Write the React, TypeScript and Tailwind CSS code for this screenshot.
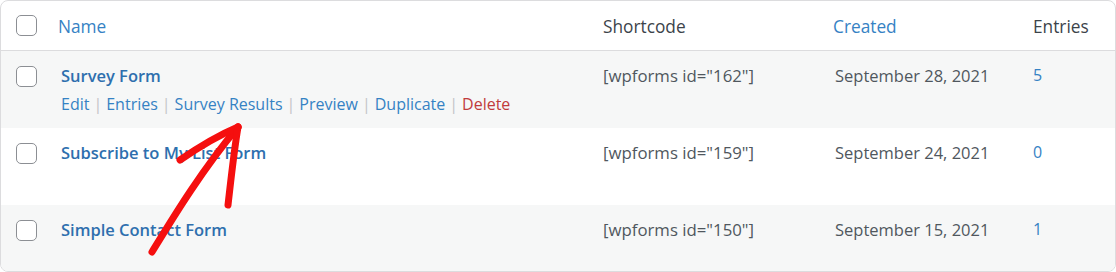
import React from "react";

const Check = () => (
  <span className="block w-[21px] h-[21px] rounded-[5px] border border-[#8c8f94] bg-white" />
);

const rows = [
  { title: "Survey Form", id: "162", date: "September 28, 2021", n: "5", actions: true, bg: "bg-[#f6f7f7]", h: "h-[77px]" },
  { title: "Subscribe to My List Form", id: "159", date: "September 24, 2021", n: "0", actions: false, bg: "bg-white", h: "h-[77px]" },
  { title: "Simple Contact Form", id: "150", date: "September 15, 2021", n: "1", actions: false, bg: "bg-[#f6f7f7]", h: "h-[67px]" },
];

export default function App() {
  const sep = <span className="text-[#c3c4c7] px-[4px]">|</span>;
  return (
    <div className="w-[1116px] h-[272px] bg-white" style={{ fontFamily: '"Open Sans", "Noto Sans", sans-serif' }}>
      <div className="relative w-full h-full border border-[#dcdcde] rounded-[8px] overflow-hidden">
        <div className="grid grid-cols-[57px_545px_230px_200px_1fr] h-[50px] items-center border-b border-[#dcdcde] shadow-[0_1px_1px_rgba(0,0,0,0.04)] text-[17.3px] pt-[2px]">
          <div className="pl-[15px] -mt-[2px]"><Check /></div>
          <div className="text-[#3582c4]">Name</div>
          <div className="text-[#3c434a]">Shortcode</div>
          <div className="text-[#3582c4]">Created</div>
          <div className="text-[#3c434a]">Entries</div>
        </div>
        {rows.map((r) => (
          <div key={r.id} className={`grid grid-cols-[57px_545px_230px_200px_1fr] ${r.h} ${r.bg} text-[16px]`}>
            <div className="pl-[15px] pt-[15px]"><Check /></div>
            <div className="pl-[3px] pt-[12px]">
              <div className="font-semibold text-[16.5px] text-[#2e6fae] leading-[25px]">{r.title}</div>
              {r.actions && (
                <div className="leading-[25px] mt-[4px] text-[#3582c4]">
                  <span>Edit</span>{sep}<span>Entries</span>{sep}<span>Survey Results</span>{sep}
                  <span>Preview</span>{sep}<span>Duplicate</span>{sep}<span className="text-[#c13b3c]">Delete</span>
                </div>
              )}
            </div>
            <div className="pt-[12px] leading-[25px] text-[16.8px] text-[#50575e]">[wpforms id="{r.id}"]</div>
            <div className="pt-[12px] pl-[2px] leading-[25px] text-[16.5px] text-[#50575e]">{r.date}</div>
            <div className="pt-[12px] leading-[25px] text-[#3582c4]">{r.n}</div>
          </div>
        ))}
        <svg className="absolute left-0 top-0 pointer-events-none" width="1116" height="272" viewBox="0 0 1116 272">
          <g fill="none" stroke="#f50f0f" strokeWidth="7" strokeLinecap="round" strokeLinejoin="round">
            <path d="M151 251 C 170 220, 200 170, 237 126" />
            <path d="M179 159 C 198 146, 218 134, 237 126" />
            <path d="M237 126 C 233 150, 230 178, 227 204" />
          </g>
        </svg>
      </div>
    </div>
  );
}
